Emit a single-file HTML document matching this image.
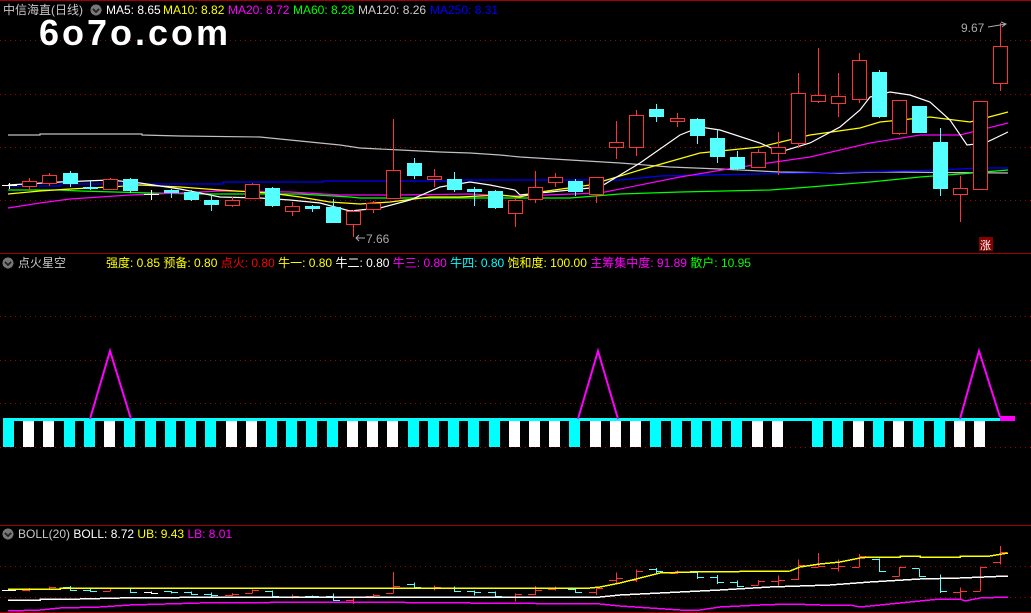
<!DOCTYPE html>
<html><head><meta charset="utf-8"><style>
html,body{margin:0;padding:0;background:#000;width:1031px;height:613px;overflow:hidden}
svg{display:block}
text{font-family:"Liberation Sans","Noto Sans CJK SC",sans-serif;font-size:12px}
</style></head><body>
<svg id="s" width="1031" height="613" xmlns="http://www.w3.org/2000/svg" shape-rendering="crispEdges">
<rect width="1031" height="613" fill="#000"/>
<line x1="0" y1="0.5" x2="1031" y2="0.5" stroke="#a00000"/>
<g stroke="#a00000" stroke-dasharray="1,4">
<line x1="0" y1="40.5" x2="1031" y2="40.5"/><line x1="0" y1="94.5" x2="1031" y2="94.5"/>
<line x1="0" y1="147.5" x2="1031" y2="147.5"/><line x1="0" y1="200.5" x2="1031" y2="200.5"/>
<line x1="0" y1="316.5" x2="1031" y2="316.5"/><line x1="0" y1="360.5" x2="1031" y2="360.5"/>
<line x1="0" y1="403.5" x2="1031" y2="403.5"/><line x1="0" y1="447.5" x2="1031" y2="447.5"/>
<line x1="0" y1="566.5" x2="1031" y2="566.5"/><line x1="0" y1="597.5" x2="1031" y2="597.5"/>
</g>
<line x1="0" y1="253.5" x2="1031" y2="253.5" stroke="#a00000"/>
<line x1="0" y1="525.5" x2="1031" y2="525.5" stroke="#a00000"/>
<line x1="0" y1="612.5" x2="1031" y2="612.5" stroke="#a00000"/>
<g id="ma" fill="none" shape-rendering="auto" stroke-width="1.2"></g>
<g id="cd"></g>
<g id="ind"></g>
<g id="bl" fill="none"></g>
<text x="3" y="14" fill="#c8c8c8">中信海直(日线)</text>
<circle cx="96" cy="10" r="5.5" fill="#777"/><path d="M93 9l3 3 3-3" stroke="#222" stroke-width="1.5" fill="none"/>
<text x="106" y="14" fill="#fff">MA5: 8.65</text>
<text x="163" y="14" fill="#ff0">MA10: 8.82</text>
<text x="228" y="14" fill="#f0f">MA20: 8.72</text>
<text x="293" y="14" fill="#0f0">MA60: 8.28</text>
<text x="358" y="14" fill="#ccc">MA120: 8.26</text>
<text x="430" y="14" fill="#00f">MA250: 8.31</text>
<text x="39" y="45" fill="#fff" style="font-size:36px;font-weight:bold;letter-spacing:3px">6o7o.com</text>
<text x="961" y="32" fill="#aaa">9.67</text>
<path d="M988 27 L1006 24 M1001 22 L1006 24 L1002 27" stroke="#aaa" fill="none" shape-rendering="auto"/>
<text x="366" y="243" fill="#aaa">7.66</text>
<path d="M356 238 H365 M359 235 L356 238 L359 241" stroke="#aaa" fill="none" shape-rendering="auto"/>
<rect x="979" y="237" width="14" height="14" fill="#800"/>
<text x="980" y="249" fill="#fff" style="font-size:11px">涨</text>
<circle cx="8" cy="263" r="5.5" fill="#777"/><path d="M5 262l3 3 3-3" stroke="#222" stroke-width="1.5" fill="none"/>
<text x="18" y="267" fill="#c8c8c8">点火星空</text>
<text x="106" y="267"><tspan fill="#ff0">强度: 0.85 </tspan><tspan fill="#ff0">预备: 0.80 </tspan><tspan fill="#f00">点火: 0.80 </tspan><tspan fill="#ff0">牛一: 0.80 </tspan><tspan fill="#fff">牛二: 0.80 </tspan><tspan fill="#f0f">牛三: 0.80 </tspan><tspan fill="#0ff">牛四: 0.80 </tspan><tspan fill="#ff0">饱和度: 100.00 </tspan><tspan fill="#f0f">主筹集中度: 91.89 </tspan><tspan fill="#0f0">散户: 10.95</tspan></text>
<circle cx="8" cy="534" r="5.5" fill="#777"/><path d="M5 533l3 3 3-3" stroke="#222" stroke-width="1.5" fill="none"/>
<text x="18" y="538"><tspan fill="#c8c8c8">BOLL(20) </tspan><tspan fill="#fff">BOLL: 8.72 </tspan><tspan fill="#ff0">UB: 9.43 </tspan><tspan fill="#f0f">LB: 8.01</tspan></text>
</svg>
<script>
var NS="http://www.w3.org/2000/svg";
function el(p,t,a){var e=document.createElementNS(NS,t);for(var k in a)e.setAttribute(k,a[k]);document.getElementById(p).appendChild(e);return e;}
function pl(p,c,pts,w){el(p,"polyline",{points:pts,stroke:c,"stroke-width":w||1.2});}
pl("ma","#c0c0c0","8,135 40,135 40,134 142,134 142,135 180,136 260,137 290,140 320,143 340,145 360,148 400,150 440,152 470,153 500,155 520,157 570,160 620,163 670,167 720,169 780,172 840,173 880,172 1008,173");
pl("ma","#0000ff","8,186 60,186 60,184 223,184 223,182 323,182 323,181 447,181 447,180 620,180 660,176 760,174 860,172 940,170 980,168 1008,168");
pl("ma","#00ff00","8,190 60,190 80,191 150,193 200,194 300,194 350,197 360,198 570,198 620,194 680,192 770,190 810,187 870,182 920,177 960,174 1008,170");
pl("ma","#ff00ff","8,208 40,203 70,199 100,197 130,195 180,193 220,191 290,192 340,195 400,195 470,194 510,196 520,196 600,193 680,177 740,167 810,157 870,143 920,135 960,135 1008,123");
pl("ma","#ffff00","8,194 40,191 70,189 110,187 140,185 180,187 220,190 270,193 300,197 330,202 360,204 390,202 430,197 460,197 500,195 520,197 540,192 590,185 640,170 700,153 760,147 810,135 860,128 880,122 930,117 970,122 1008,112");
pl("ma","#ffffff","8,185 60,182 110,180 140,183 180,189 220,197 260,198 290,200 320,203 350,211 380,208 410,200 440,187 470,182 490,185 515,190 520,195 600,187 640,163 680,135 700,127 720,130 760,143 780,152 810,143 840,127 860,110 870,97 890,92 910,95 930,102 950,120 967,145 985,143 1008,132");
var C=[[185,187,183,189,2],[181,186,178,190,1],[175,183,173,186,1],[173,184,171,187,0],[187,189,181,190,0],[179,189,178,190,1],[179,191,178,193,0],[194,196,190,200,2],[190,193,189,198,0],[192,200,190,201,0],[200,205,195,211,0],[200,205,197,207,1],[184,198,183,199,1],[188,206,187,207,0],[206,211,202,216,1],[206,209,205,212,0],[207,223,199,223,0],[211,224,210,237,1],[203,209,201,213,1],[170,198,119,198,1],[163,176,158,179,0],[176,179,169,187,1],[179,190,172,192,0],[189,192,187,206,0],[191,208,190,209,0],[200,213,198,227,1],[187,199,171,203,1],[177,182,173,187,1],[181,192,179,196,0],[177,194,177,203,1],[142,147,121,159,1],[115,147,110,156,1],[109,117,104,122,0],[118,121,113,127,1],[119,136,118,144,0],[138,157,130,163,0],[157,169,151,170,0],[152,167,149,168,1],[147,153,132,175,1],[93,143,73,148,1],[95,101,48,103,1],[96,103,73,117,1],[60,99,53,103,1],[72,117,70,118,0],[100,133,100,135,1],[106,133,106,133,0],[142,189,128,196,0],[188,194,176,222,1],[101,189,101,190,1],[46,83,23,91,1]];
function by(y){return 546+(y-23)*0.271;}
C.forEach(function(c,i){
 var cx=Math.round(9+20.23*i), x=cx-7;
 var col=c[4]==1?"#ff3333":(c[4]==0?"#55ffff":"#ffffff");
 el("cd","line",{x1:cx+.5,y1:c[2],x2:cx+.5,y2:c[3],stroke:col});
 if(c[4]==1){el("cd","rect",{x:x+.5,y:c[0]+.5,width:14,height:Math.max(c[1]-c[0],1),fill:"#000",stroke:col});}
 else if(c[4]==0){el("cd","rect",{x:x,y:c[0],width:15,height:Math.max(c[1]-c[0],2),fill:col});}
 else{el("cd","line",{x1:x,y1:c[0]+.5,x2:x+15,y2:c[0]+.5,stroke:col});}
 var o=c[4]==1?c[1]:c[0], cl=c[4]==1?c[0]:c[1];
 var bc=c[4]==1?"#ff3333":(c[4]==0?"#55ffff":"#ffffff");
 el("bl","line",{x1:cx+.5,y1:by(c[2]),x2:cx+.5,y2:by(c[3]),stroke:bc});
 el("bl","line",{x1:cx-7,y1:Math.round(by(o))+.5,x2:cx,y2:Math.round(by(o))+.5,stroke:bc});
 el("bl","line",{x1:cx,y1:Math.round(by(cl))+.5,x2:cx+7,y2:Math.round(by(cl))+.5,stroke:bc});
});
pl("bl","#ffff00","8,589 60,589 60,588 540,588 590,588 600,587 620,583 640,578 660,573 690,572 790,571 800,567 820,564 840,562 860,558 870,557 900,557 900,556 920,556 920,557 960,557 960,556 990,556 1008,553",1.5);
pl("bl","#ffffff","8,600 40,600 40,599 80,599 120,598 240,597 600,597 620,595 660,593 720,590 770,587 830,585 870,582 920,579 960,578 1008,576",1.5);
pl("bl","#ff00ff","8,611 40,610 60,608 100,607 130,605 200,603 340,602 600,604 620,606 650,608 680,610 700,610 720,607 760,605 790,604 820,605 850,605 860,607 890,604 920,601 940,599 960,599 965,601 980,598 1008,597",1.5);
var P="CWWCCWCCCCCWWCCCCWWWCCCCCWWWCWWWCCCCCWW_CCWCWCCWW";
for(var i=0;i<P.length;i++){if(P[i]=="_")continue;el("ind","rect",{x:Math.round(3+20.23*i),y:421,width:11,height:26,fill:P[i]=="C"?"#00ffff":"#ffffff"});}
el("ind","rect",{x:3,y:418,width:1000,height:3,fill:"#00ffff"});
el("ind","polyline",{points:"90,419 110,351 131,419",stroke:"#ff00ff","stroke-width":2,fill:"none","shape-rendering":"auto"});
el("ind","polyline",{points:"578,419 598,351 618,419",stroke:"#ff00ff","stroke-width":2,fill:"none","shape-rendering":"auto"});
el("ind","polyline",{points:"960,419 979,351 1000,417",stroke:"#ff00ff","stroke-width":2,fill:"none","shape-rendering":"auto"});
el("ind","rect",{x:1000,y:416,width:15,height:5,fill:"#ff00ff"});
</script>
</body></html>
